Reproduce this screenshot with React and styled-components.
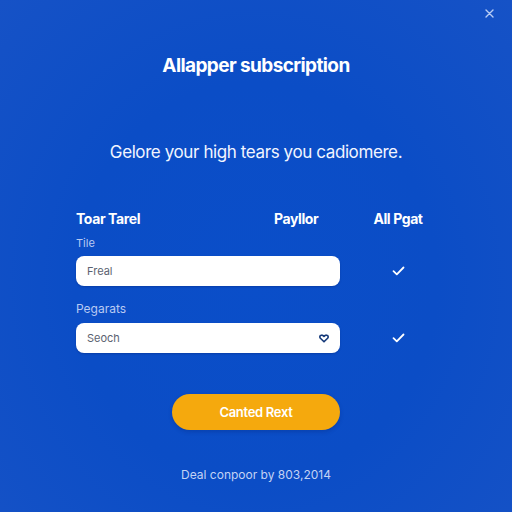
import React from "react";
import styled, { createGlobalStyle } from "styled-components";

const GlobalStyle = createGlobalStyle`
  html, body {
    margin: 0;
    padding: 0;
  }
  body {
    font-family: Inter, "Open Sans", sans-serif;
  }
`;

const Page = styled.div`
  position: relative;
  width: 512px;
  height: 512px;
  box-sizing: border-box;
  padding-top: 52px;
  background: radial-gradient(
    ellipse at 50% 55%,
    #0a4ec9 0%,
    #0b4dc6 50%,
    #1652c6 100%
  );
  color: #fff;
  display: flex;
  flex-direction: column;
  align-items: center;
  overflow: hidden;
`;

const Close = styled.button`
  position: absolute;
  top: 7px;
  right: 17px;
  width: 12px;
  height: 12px;
  padding: 0;
  border: 0;
  background: none;
  display: flex;
  align-items: center;
  justify-content: center;
`;

const Title = styled.h1`
  margin: 0;
  font-size: 19px;
  font-weight: 700;
  letter-spacing: -0.6px;
  line-height: 28px;
`;

const Subtitle = styled.p`
  margin: 58px 0 0;
  font-size: 17px;
  font-weight: 400;
  letter-spacing: -0.4px;
  line-height: 28px;
  color: #f2f5ff;
`;

const Form = styled.div`
  width: 380px;
  margin: 43px 0 0 76px;
  display: grid;
  grid-template-columns: 264px 116px;
  align-self: flex-start;
`;

const HeaderRow = styled.div`
  grid-column: 1 / span 2;
  display: grid;
  grid-template-columns: 198px 66px 116px;
  font-size: 14px;
  font-weight: 700;
  letter-spacing: -0.4px;
  line-height: 20px;
`;

const HeadCell = styled.span`
  text-align: ${(p) => (p.$center ? "center" : "left")};
`;

const Label = styled.div`
  grid-column: 1 / span 2;
  font-size: ${(p) => p.$size || 11}px;
  color: #b9caf2;
  line-height: 16px;
  margin-top: ${(p) => p.$top}px;
  margin-bottom: ${(p) => p.$bottom}px;
`;

const Field = styled.div`
  height: 30px;
  border-radius: 8px;
  background: #fff;
  box-sizing: border-box;
  padding: 0 11px;
  display: flex;
  align-items: center;
  justify-content: space-between;
  font-size: 11px;
  color: #5b6270;
  box-shadow: 0 1px 2px rgba(0, 20, 80, 0.25);
`;

const CheckCell = styled.div`
  display: flex;
  align-items: center;
  justify-content: center;
`;

const Button = styled.button`
  margin-top: 41px;
  width: 168px;
  height: 36px;
  border: 0;
  border-radius: 18px;
  background: #f5a90d;
  color: #fff;
  font-family: Inter, sans-serif;
  font-size: 13px;
  font-weight: 600;
  letter-spacing: -0.3px;
  box-shadow: 0 2px 4px rgba(0, 20, 80, 0.2);
`;

const Footer = styled.p`
  margin: 37px 0 0;
  font-size: 12px;
  color: #c3d2f4;
  line-height: 16px;
`;

const Check = () => (
  <svg width="13" height="10" viewBox="0 0 13 10" fill="none">
    <path
      d="M1.5 5.2 L4.8 8.3 L11.5 1.5"
      stroke="#fff"
      strokeWidth="1.8"
      strokeLinecap="round"
      strokeLinejoin="round"
    />
  </svg>
);

const Heart = () => (
  <svg width="10" height="9" viewBox="0 0 10 9" fill="none">
    <path
      d="M5 7.8 L1.4 4.2 C0.4 3.1 0.8 1.2 2.4 1.1 C3.4 1 4.4 1.6 5 2.4 C5.6 1.6 6.6 1 7.6 1.1 C9.2 1.2 9.6 3.1 8.6 4.2 Z"
      stroke="#163a7a"
      strokeWidth="1.6"
      strokeLinejoin="round"
    />
  </svg>
);

export default function App() {
  return (
    <>
      <GlobalStyle />
      <Page>
        <Close aria-label="close">
          <svg width="9" height="9" viewBox="0 0 9 9">
            <path
              d="M1 1 L8 8 M8 1 L1 8"
              stroke="#b8cdf5"
              strokeWidth="1.4"
              strokeLinecap="round"
            />
          </svg>
        </Close>
        <Title>Allapper subscription</Title>
        <Subtitle>Gelore your high tears you cadiomere.</Subtitle>
        <Form>
          <HeaderRow>
            <HeadCell>Toar Tarel</HeadCell>
            <HeadCell>Payllor</HeadCell>
            <HeadCell $center>All Pgat</HeadCell>
          </HeaderRow>
          <Label $top={6} $bottom={5}>Tile</Label>
          <Field>Freal</Field>
          <CheckCell>
            <Check />
          </CheckCell>
          <Label $size={12} $top={15} $bottom={6}>Pegarats</Label>
          <Field>
            Seoch
            <Heart />
          </Field>
          <CheckCell>
            <Check />
          </CheckCell>
        </Form>
        <Button>Canted Rext</Button>
        <Footer>Deal conpoor by 803,2014</Footer>
      </Page>
    </>
  );
}
